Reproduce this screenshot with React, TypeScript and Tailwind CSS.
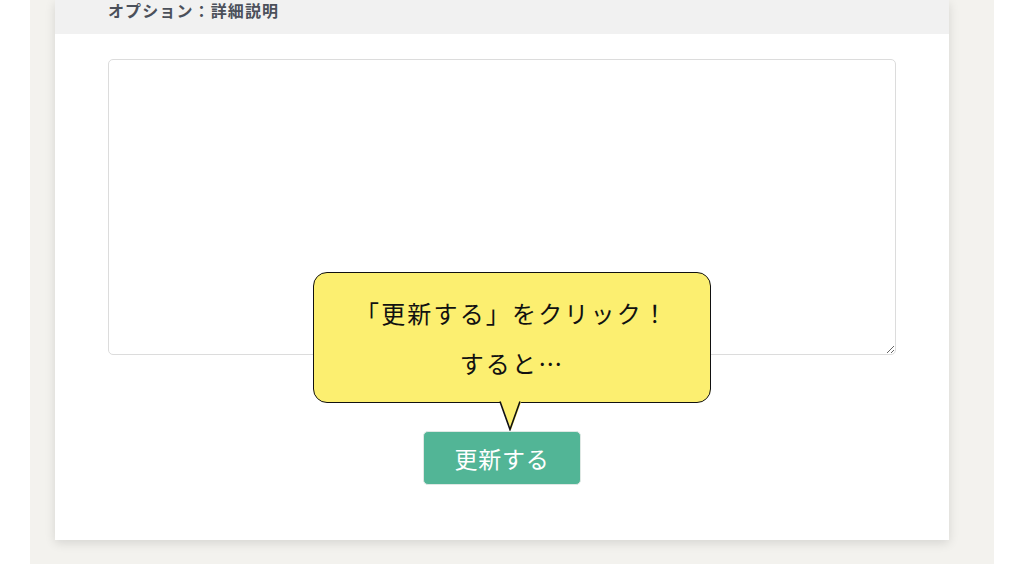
import React from "react"

const jp = { fontFamily: '"Noto Sans CJK JP", "Noto Sans", sans-serif' }

function Bubble() {
  return (
    <div className="absolute left-[313px] top-[272px] w-[398px] h-[131px]">
      <div className="relative h-full w-full rounded-[14px] border-[1.5px] border-[#111] bg-[#fcef70] flex flex-col items-center justify-center text-[#111] text-[24px] tracking-[0.09em]">
        <p className="leading-[50px]">「更新する」をクリック！</p>
        <p className="leading-[50px]">すると…</p>
      </div>
      <svg className="absolute left-[185px] top-[128px]" width="26" height="31" viewBox="0 0 26 31">
        <polygon points="2,0 24,0 13,30" fill="#fcef70" />
        <polyline points="2,1.5 12,29.5 22,1.5" fill="none" stroke="#111" strokeWidth="1.6" strokeLinejoin="miter" />
      </svg>
    </div>
  )
}

export default function App() {
  return (
    <div className="relative w-[1024px] h-[576px] bg-white overflow-hidden" style={jp}>
      <div className="mx-[30px] h-[564px] bg-[#f3f2ee] pl-[25px] pr-[45px]">
        <div className="h-[540px] bg-white shadow-[0_3px_10px_rgba(0,0,0,0.12)] flex flex-col">
          <div className="h-[34px] bg-[#f1f1f1] pl-[53px] pt-[1px] flex items-start">
            <span className="text-[16px] font-bold leading-[18px] tracking-[0.07em] text-[#4b505a]">
              オプション：詳細説明
            </span>
          </div>
          <div className="px-[53px] pt-[25px]">
            <textarea className="block w-full h-[296px] rounded-[5px] border border-[#dcdcdc] bg-white resize-y outline-none" />
          </div>
          <div className="flex justify-center pt-[76px]">
            <button className="w-[158px] h-[54px] rounded-[5px] border border-[#dfe8e4] bg-[#52b596] text-white text-[23px] tracking-[0.03em]">
              更新する
            </button>
          </div>
        </div>
      </div>
      <Bubble />
    </div>
  )
}
